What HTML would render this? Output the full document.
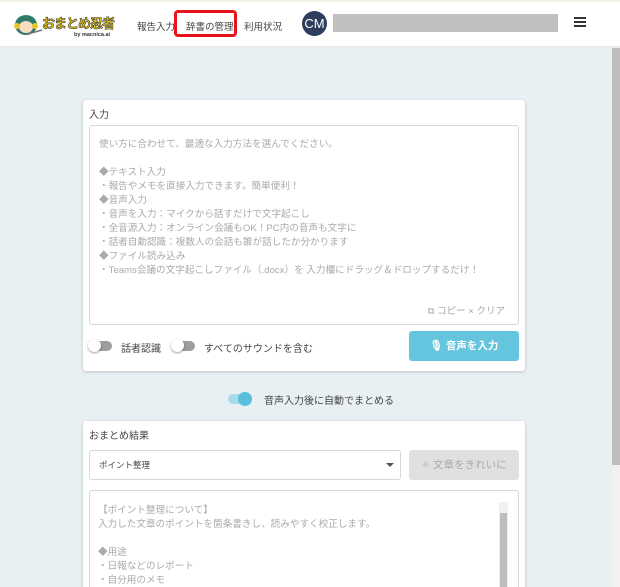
<!DOCTYPE html>
<html style="overflow:hidden;height:587px"><head><meta charset="utf-8"><style>
*{box-sizing:border-box;margin:0;padding:0}
body{width:620px;height:587px;overflow:hidden;background:#e9f0f4;font-family:"Liberation Sans","Noto Sans CJK JP",sans-serif;position:relative;color:#333}
.abs{position:absolute}
.hdr{left:0;top:0;width:620px;height:47px;background:#fff;border-top:2px solid #eef2e4;border-bottom:1px solid #e3e7ea}
.nav{font-size:9.5px;color:#444;top:19px}
.card{background:#fff;border-radius:3px;box-shadow:0 1px 3px rgba(0,0,0,.2)}
.ta{border:1px solid #d5d9dc;border-radius:3px;background:#fff}
.tl{font-size:9.6px;color:#aaa;line-height:14px;white-space:pre}
.tg{width:22px;height:10px;border-radius:5px;background:#9e9e9e}
.tk{width:13px;height:13px;border-radius:50%;background:#fff;box-shadow:0 1px 2px rgba(0,0,0,.4);top:-2px;left:-2px;position:absolute}
</style></head><body>
<div class="abs hdr"></div>
<svg class="abs" style="left:12px;top:12px" width="32" height="26" viewBox="0 0 32 26"><ellipse cx="14" cy="13" rx="11" ry="10" fill="#2f7a6a"/><ellipse cx="14" cy="15" rx="7" ry="6" fill="#f6dcc0"/><circle cx="5" cy="14" r="3" fill="#e8c62a"/><circle cx="23" cy="14" r="3" fill="#e8c62a"/><line x1="16" y1="22" x2="30" y2="18" stroke="#777" stroke-width="1.5"/></svg>
<div class="abs" style="left:42px;top:13px;font-size:13px;font-weight:bold;color:#e4c41a;-webkit-text-stroke:0.6px #3a3a2a;letter-spacing:-1px">おまとめ忍者</div>
<div class="abs" style="left:74px;top:32px;font-size:5.5px;font-weight:bold;color:#333">by macnica.ai</div>
<div class="abs nav" style="left:137px">報告入力</div>
<div class="abs" style="left:174px;top:10px;width:63px;height:27px;border:3px solid #e8141c;border-radius:4px"></div>
<div class="abs nav" style="left:186px">辞書の管理</div>
<div class="abs nav" style="left:244px">利用状況</div>
<div class="abs" style="left:302px;top:11px;width:25px;height:25px;border-radius:50%;background:#2c3e5c;color:#fff;font-size:13px;line-height:25px;text-align:center">CM</div>
<div class="abs" style="left:333px;top:14px;width:225px;height:18px;background:#c0c0c0"></div>
<div class="abs" style="left:574px;top:17px;width:12px;height:2px;background:#333;box-shadow:0 4px 0 #333,0 8px 0 #333"></div>
<div class="abs" style="left:612px;top:48px;width:8px;height:539px;background:#f1f1f1"></div>
<div class="abs" style="left:612px;top:48px;width:8px;height:417px;background:#bdbdbd"></div>

<div class="abs card" style="left:83px;top:100px;width:442px;height:271px"></div>
<div class="abs" style="left:89px;top:106px;font-size:10px;color:#444">入力</div>
<div class="abs ta" style="left:89px;top:125px;width:430px;height:200px"></div>
<div class="abs tl" style="left:99px;top:138px">使い方に合わせて、最適な入力方法を選んでください。

◆テキスト入力
・報告やメモを直接入力できます。簡単便利！
◆音声入力
・音声を入力：マイクから話すだけで文字起こし
・全音源入力：オンライン会議もOK！PC内の音声も文字に
・話者自動認識：複数人の会話も誰が話したか分かります
◆ファイル読み込み
・Teams会議の文字起こしファイル（.docx）を 入力欄にドラッグ＆ドロップするだけ！</div>
<div class="abs" style="left:418px;top:303px;width:87px;text-align:right;font-size:9.5px;color:#aaa">⧉ コピー × クリア</div>
<div class="abs tg" style="left:90px;top:341px"><div class="tk"></div></div>
<div class="abs" style="left:121px;top:340px;font-size:10px;color:#444">話者認識</div>
<div class="abs tg" style="left:173px;top:341px"><div class="tk"></div></div>
<div class="abs" style="left:204px;top:340px;font-size:10px;color:#444">すべてのサウンドを含む</div>
<div class="abs" style="left:409px;top:331px;width:110px;height:30px;background:#66c5de;border-radius:3px;color:#fff;font-size:10.5px;font-weight:bold;line-height:30px;text-align:center">🎙︎ 音声を入力</div>

<div class="abs" style="left:228px;top:394px;width:24px;height:10px;border-radius:5px;background:#a6dceb"></div>
<div class="abs" style="left:238px;top:392px;width:14px;height:14px;border-radius:50%;background:#5bbfdc"></div>
<div class="abs" style="left:264px;top:392px;font-size:10px;color:#444">音声入力後に自動でまとめる</div>

<div class="abs card" style="left:83px;top:421px;width:442px;height:180px"></div>
<div class="abs" style="left:89px;top:427px;font-size:10px;color:#444">おまとめ結果</div>
<div class="abs ta" style="left:89px;top:450px;width:312px;height:30px"></div>
<div class="abs" style="left:99px;top:459px;font-size:8.5px;color:#444">ポイント整理</div>
<div class="abs" style="left:386px;top:463px;border:4px solid transparent;border-top:4px solid #555;border-bottom:0"></div>
<div class="abs" style="left:409px;top:450px;width:110px;height:30px;background:#e0e0e0;border-radius:3px;color:#aaa;font-size:10.5px;line-height:30px;text-align:center">✧ 文章をきれいに</div>
<div class="abs ta" style="left:89px;top:490px;width:430px;height:110px"></div>
<div class="abs tl" style="left:98px;top:504px">【ポイント整理について】
入力した文章のポイントを箇条書きし、読みやすく校正します。

◆用途
・日報などのレポート
・自分用のメモ</div>
<div class="abs" style="left:499px;top:502px;width:9px;height:85px;background:#f1f1f1"></div>
<div class="abs" style="left:500px;top:513px;width:7px;height:74px;background:#bdbdbd"></div>
</body></html>
